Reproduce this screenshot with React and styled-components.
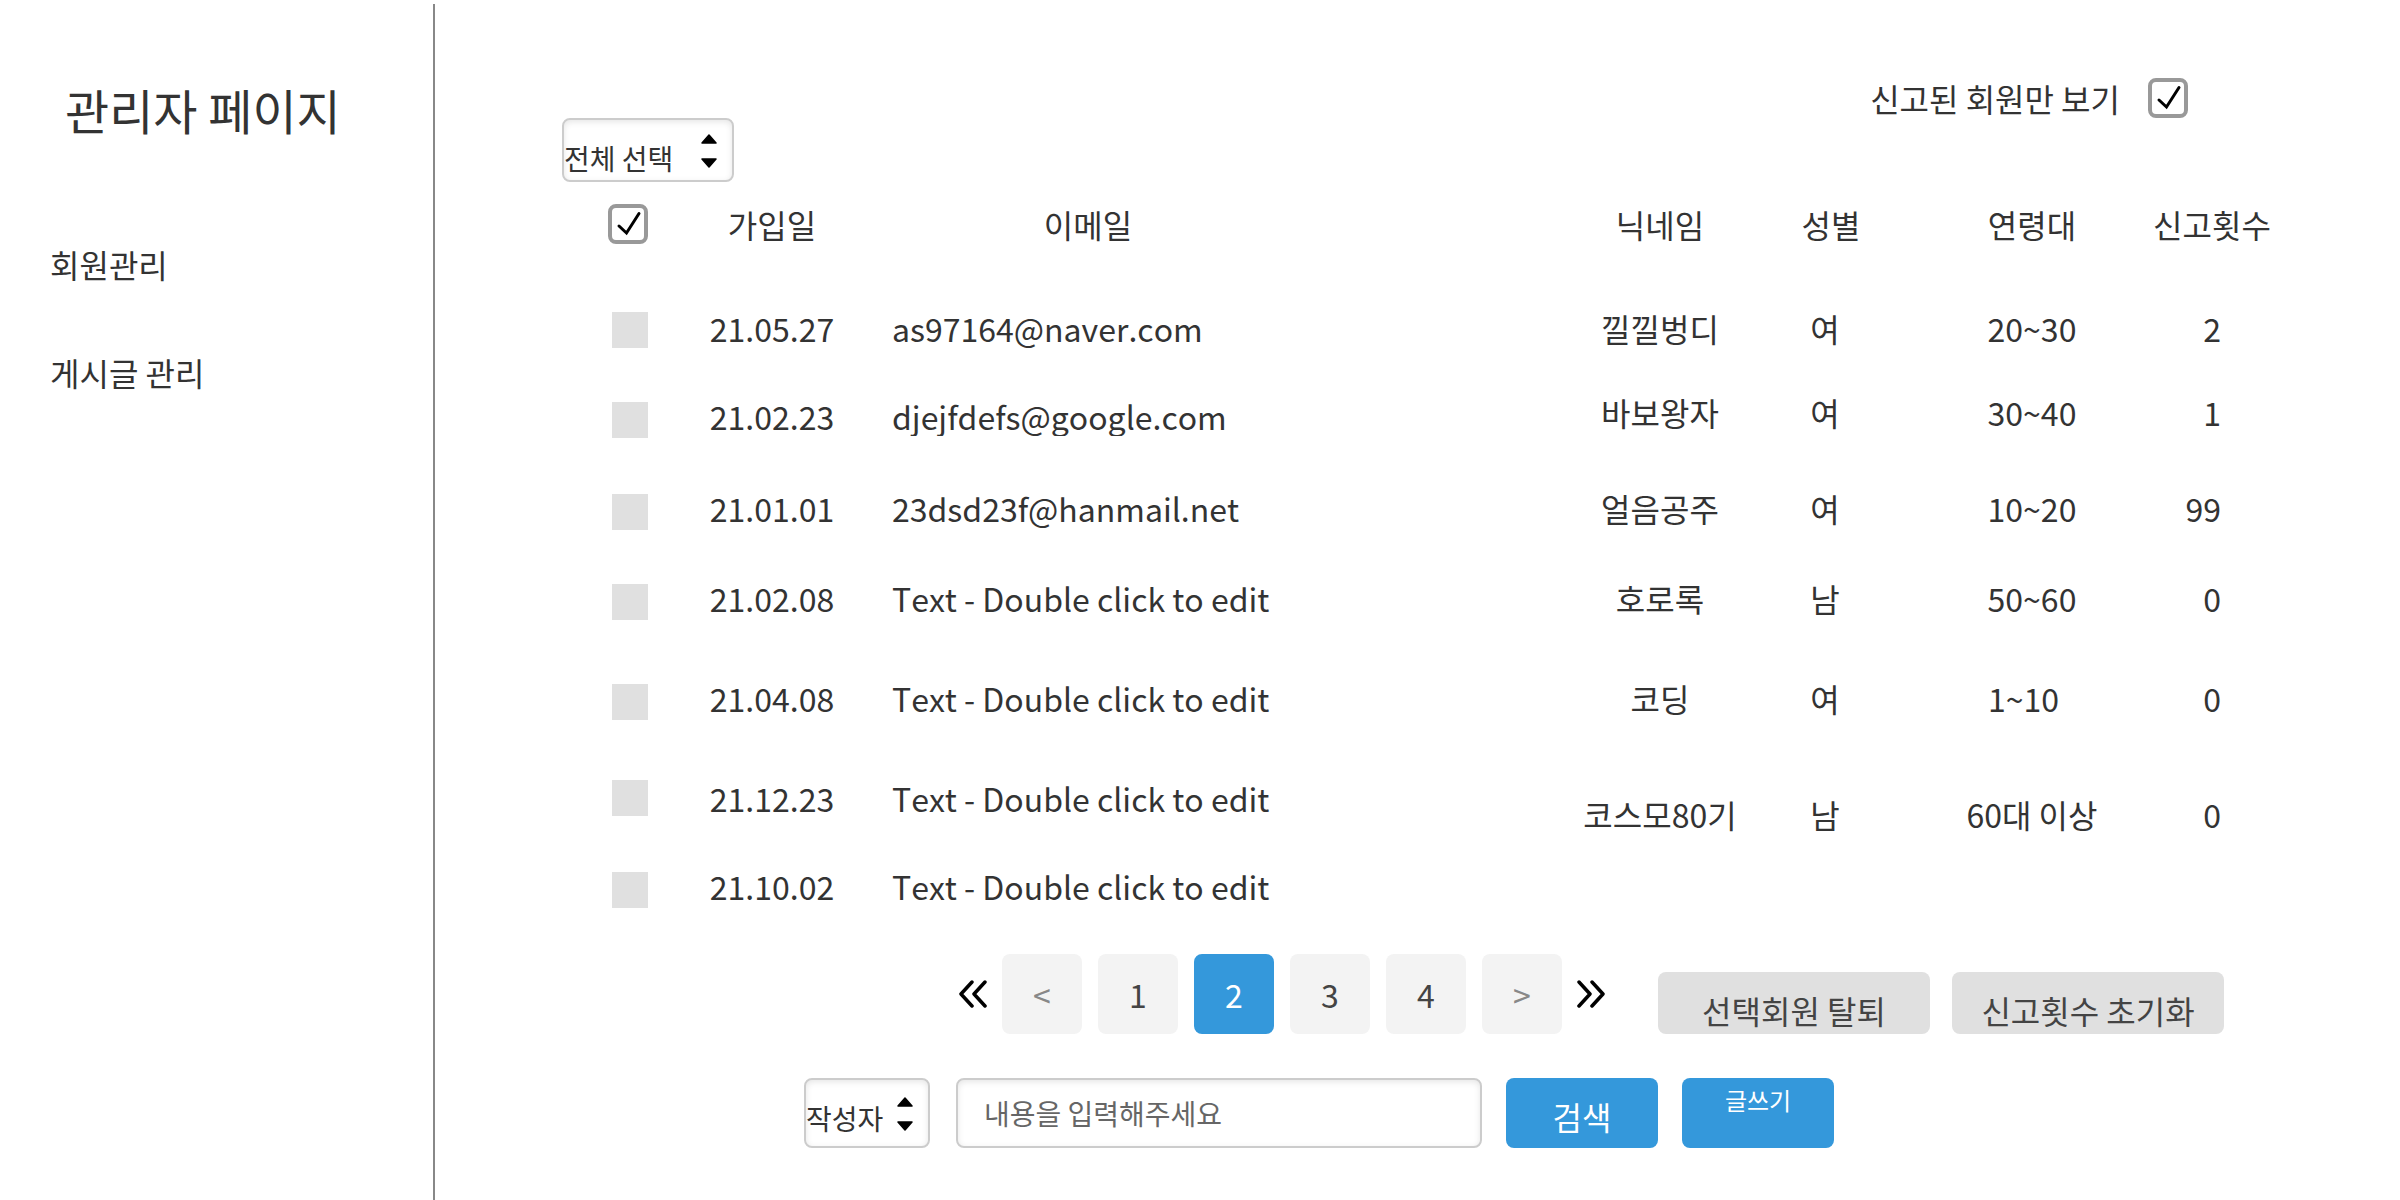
import React from "react";
import styled, { createGlobalStyle, css } from "styled-components";

const GlobalStyle = createGlobalStyle`
  *, *::before, *::after { box-sizing: border-box; }
  body {
    margin: 0;
    background: #fff;
    color: #333;
    font-family: "Noto Sans CJK KR", sans-serif;
    font-size: 32px;
    font-kerning: none;
    line-height: 48px;
  }
  button, input, select { font: inherit; color: inherit; margin: 0; }
`;

const Page = styled.div`
  display: grid;
  grid-template-columns: 435px minmax(0, 1fr);
  min-height: 100vh;
  padding-top: 4px;
`;

const Sidebar = styled.aside`
  border-right: 2px solid #888;
  padding: 69px 0 0 50px;
`;

const Title = styled.h1`
  margin: 0 0 95px;
  padding-left: 15px;
  font-size: 48px;
  font-weight: 400;
  line-height: 72px;
`;

const Nav = styled.nav`
  display: flex;
  flex-direction: column;
  align-items: flex-start;
  gap: 60px;
`;

const NavLink = styled.a`
  color: inherit;
  text-decoration: none;
`;

const Main = styled.main`
  padding: 74px 118px 0 127px;
`;

const FilterBar = styled.div`
  display: flex;
  justify-content: flex-end;
  padding-right: 94px;
`;

const FilterLabel = styled.label`
  display: flex;
  align-items: center;
  gap: 28px;
  height: 40px;
`;

const CheckWrap = styled.span`
  display: inline-grid;
  width: 40px;
  height: 40px;

  > * { grid-area: 1 / 1; }

  svg { pointer-events: none; }

  input:not(:checked) + svg { visibility: hidden; }
`;

const CheckInput = styled.input`
  appearance: none;
  width: 40px;
  height: 40px;
  border: 4px solid #999;
  border-radius: 8px;
  background: #fff;
`;

const RowCheck = styled.input`
  appearance: none;
  display: block;
  width: 36px;
  height: 36px;
  margin-left: auto;
  background: #e0e0e0;

  &:checked { background: #3498db; }
`;

const SelectWrap = styled.span`
  position: relative;
  display: block;
  flex: none;
  width: ${(p) => p.$width}px;

  svg {
    position: absolute;
    right: 17px;
    top: calc(50% - 16px);
    pointer-events: none;
  }
`;

const field = css`
  border: 2px solid #ccc;
  border-radius: 8px;
  background: #fff;
  box-shadow: inset 0 2px 6px rgba(0, 0, 0, 0.1);
  font-size: 28px;
`;

const Select = styled.select`
  ${field}
  appearance: none;
  display: block;
  width: 100%;
  height: ${(p) => p.$height}px;
  padding: 17px 0 ${(p) => p.$height - 63}px;
  line-height: 42px;
`;

const Table = styled.table`
  width: 100%;
  margin-top: 17px;
  border-collapse: collapse;
  table-layout: fixed;
  white-space: nowrap;
`;

const Col = styled.col`
  width: ${(p) => (p.$width ? `${p.$width}px` : "auto")};
`;

const HeadRow = styled.tr`
  height: 101px;
`;

const Th = styled.th`
  padding: 1px ${(p) => p.$right || 0}px 0 0;
  font-weight: 400;
  text-align: center;
  vertical-align: top;
`;

const CheckTh = styled.th`
  padding: 5px 46px 0 0;
  text-align: right;
  vertical-align: top;
  line-height: 0;
`;

const EmailTh = styled(Th)`
  padding-left: 42px;
  text-align: left;

  span {
    display: block;
    width: 392px;
    text-align: center;
  }
`;

const CHECK_TOP = { first: 12, even: 14, raised: 14, lowered: 10 };
const DETAIL_TOP = { first: 4, even: 4, raised: 0, lowered: 20 };

const Row = styled.tr`
  height: ${(p) => p.$height}px;
`;

const Td = styled.td`
  padding: 4px 0 0;
  text-align: center;
  vertical-align: top;
`;

const CheckTd = styled(Td)`
  padding: ${(p) => CHECK_TOP[p.$flow]}px 46px 0 0;
`;

const EmailTd = styled(Td)`
  padding-left: 42px;
  text-align: left;
`;

const ShortLine = styled.div`
  height: 44px;
  overflow: hidden;
`;

const DetailTd = styled(Td)`
  padding-top: ${(p) => DETAIL_TOP[p.$flow]}px;
`;

const GenderTd = styled(DetailTd)`
  padding-right: 26px;
`;

const AgeTd = styled(DetailTd)`
  span {
    display: inline-block;
    min-width: 88px;
    text-align: left;
  }
`;

const CountTd = styled(DetailTd)`
  padding-right: 61px;
  text-align: right;
`;

const ActionBar = styled.div`
  display: flex;
  justify-content: flex-end;
  align-items: flex-end;
  gap: 22px;
  padding-right: 58px;
`;

const Pagination = styled.nav`
  display: flex;
  align-items: center;
  gap: 15px;
  margin-right: 31px;
`;

const Pages = styled.div`
  display: flex;
  gap: 16px;
`;

const JumpButton = styled.button`
  display: block;
  padding: 0;
  border: 0;
  background: none;
  line-height: 0;
`;

const PageButton = styled.button`
  width: 80px;
  height: 80px;
  padding: 0;
  border: 0;
  border-radius: 8px;
  background: ${(p) => (p.$active ? "#3498db" : "#f3f3f3")};
  color: ${(p) => (p.$active ? "#fff" : p.$muted ? "#888" : "#444")};
`;

const GrayButton = styled.button`
  width: 272px;
  padding: 14px 0 0;
  border: 0;
  border-radius: 8px;
  background: #e0e0e0;
  color: #444;
`;

const SearchBar = styled.form`
  display: flex;
  align-items: stretch;
  gap: 24px;
  margin-top: 44px;
  padding-left: 242px;
`;

const SearchInput = styled.input`
  ${field}
  flex: 0 1 526px;
  min-width: 0;
  height: 70px;
  margin-left: 2px;
  padding: 0 26px;

  &::placeholder { color: #666; opacity: 1; }
`;

const BlueButton = styled.button`
  display: flex;
  justify-content: center;
  align-items: flex-start;
  width: 152px;
  height: 70px;
  padding: ${(p) => (p.$small ? 4 : 14)}px 0 0;
  border: 0;
  border-radius: 8px;
  background: #3498db;
  color: #fff;
  font-size: ${(p) => (p.$small ? 24 : 32)}px;
  line-height: ${(p) => (p.$small ? 36 : 48)}px;
`;

function CheckBox(props) {
  return (
    <CheckWrap>
      <CheckInput type="checkbox" defaultChecked {...props} />
      <svg width="40" height="40" viewBox="0 0 40 40" aria-hidden="true">
        <path
          d="M11 22 L18.500 29 L31 9.500"
          fill="none"
          stroke="#000"
          strokeWidth="3"
          strokeLinecap="round"
        />
      </svg>
    </CheckWrap>
  );
}

function DropDown({ width, height, label, options }) {
  return (
    <SelectWrap $width={width}>
      <Select $height={height} aria-label={label}>
        {options.map((option) => (
          <option key={option}>{option}</option>
        ))}
      </Select>
      <svg width="16" height="34" viewBox="0 0 16 34" aria-hidden="true">
        <path
          d="M8 1 L15 9 H1 Z M1 25 H15 L8 33 Z"
          stroke="#000"
          strokeWidth="1.500"
          strokeLinejoin="round"
        />
      </svg>
    </SelectWrap>
  );
}

function DoubleChevron({ next }) {
  return (
    <svg width="28" height="28" viewBox="0 0 28 28" aria-hidden="true">
      <path
        d={next ? "M2 2 L13 14 L2 26 M15 2 L26 14 L15 26" : "M13 2 L2 14 L13 26 M26 2 L15 14 L26 26"}
        fill="none"
        stroke="#000"
        strokeWidth="3.500"
        strokeLinecap="round"
        strokeLinejoin="round"
      />
    </svg>
  );
}

const members = [
  { date: "21.05.27", email: "as97164@naver.com", name: "낄낄벙디", gender: "여", age: "20~30", count: 2, height: 88, flow: "first" },
  { date: "21.02.23", email: "djejfdefs@google.com", name: "바보왕자", gender: "여", age: "30~40", count: 1, height: 92, flow: "raised", short: true },
  { date: "21.01.01", email: "23dsd23f@hanmail.net", name: "얼음공주", gender: "여", age: "10~20", count: 99, height: 90 },
  { date: "21.02.08", email: "Text - Double click to edit", name: "호로록", gender: "남", age: "50~60", count: 0, height: 100 },
  { date: "21.04.08", email: "Text - Double click to edit", name: "코딩", gender: "여", age: "1~10", count: 0, height: 100 },
  { date: "21.12.23", email: "Text - Double click to edit", name: "코스모80기", gender: "남", age: "60대 이상", count: 0, height: 88, flow: "lowered" },
  { date: "21.10.02", email: "Text - Double click to edit", height: 96 },
];

export default function App() {
  return (
    <>
      <GlobalStyle />
      <Page>
        <Sidebar>
          <Title>관리자 페이지</Title>
          <Nav>
            <NavLink href="#members">회원관리</NavLink>
            <NavLink href="#posts">게시글 관리</NavLink>
          </Nav>
        </Sidebar>
        <Main>
          <FilterBar>
            <FilterLabel>
              신고된 회원만 보기
              <CheckBox />
            </FilterLabel>
          </FilterBar>
          <DropDown width={172} height={64} label="선택" options={["전체 선택", "선택 해제"]} />
          <Table>
            <colgroup>
              <Col $width={132} />
              <Col $width={156} />
              <Col />
              <Col $width={188} />
              <Col $width={168} />
              <Col $width={220} />
              <Col $width={140} />
            </colgroup>
            <thead>
              <HeadRow>
                <CheckTh>
                  <CheckBox aria-label="전체 선택" />
                </CheckTh>
                <Th>가입일</Th>
                <EmailTh>
                  <span>이메일</span>
                </EmailTh>
                <Th>닉네임</Th>
                <Th $right={14}>성별</Th>
                <Th>연령대</Th>
                <Th>신고횟수</Th>
              </HeadRow>
            </thead>
            <tbody>
              {members.map(({ date, email, name, gender, age, count, height, flow = "even", short }) => (
                <Row key={date} $height={height}>
                  <CheckTd $flow={flow}>
                    <RowCheck type="checkbox" aria-label={date} />
                  </CheckTd>
                  <Td>{date}</Td>
                  <EmailTd>{short ? <ShortLine>{email}</ShortLine> : email}</EmailTd>
                  <DetailTd $flow={flow}>{name}</DetailTd>
                  <GenderTd $flow={flow}>{gender}</GenderTd>
                  <AgeTd $flow={flow}>{age && <span>{age}</span>}</AgeTd>
                  <CountTd $flow={flow}>{count}</CountTd>
                </Row>
              ))}
            </tbody>
          </Table>
          <ActionBar>
            <Pagination>
              <JumpButton type="button" aria-label="처음">
                <DoubleChevron />
              </JumpButton>
              <Pages>
                <PageButton $muted>&lt;</PageButton>
                <PageButton>1</PageButton>
                <PageButton $active aria-current="page">2</PageButton>
                <PageButton>3</PageButton>
                <PageButton>4</PageButton>
                <PageButton $muted>&gt;</PageButton>
              </Pages>
              <JumpButton type="button" aria-label="마지막">
                <DoubleChevron next />
              </JumpButton>
            </Pagination>
            <GrayButton type="button">선택회원 탈퇴</GrayButton>
            <GrayButton type="button">신고횟수 초기화</GrayButton>
          </ActionBar>
          <SearchBar onSubmit={(event) => event.preventDefault()}>
            <DropDown width={126} height={70} label="검색 기준" options={["작성자", "제목"]} />
            <SearchInput type="text" placeholder="내용을 입력해주세요" aria-label="검색어" />
            <BlueButton type="submit">검색</BlueButton>
            <BlueButton type="button" $small>글쓰기</BlueButton>
          </SearchBar>
        </Main>
      </Page>
    </>
  );
}
